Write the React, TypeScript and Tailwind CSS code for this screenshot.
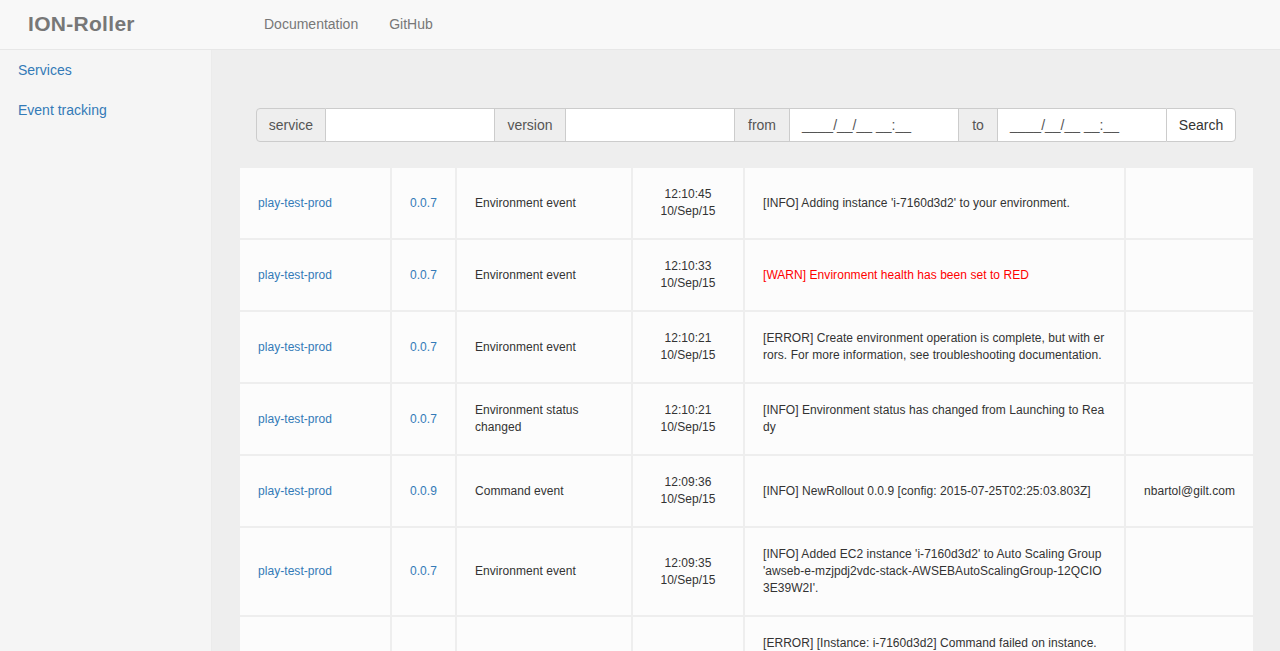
import React from "react";

interface EventRow {
  service: string;
  version: string;
  type: string;
  time: string;
  date: string;
  message: string;
  warn?: boolean;
  user?: string;
}

const rows: EventRow[] = [
  {
    service: "play-test-prod",
    version: "0.0.7",
    type: "Environment event",
    time: "12:10:45",
    date: "10/Sep/15",
    message: "[INFO] Adding instance 'i-7160d3d2' to your environment.",
  },
  {
    service: "play-test-prod",
    version: "0.0.7",
    type: "Environment event",
    time: "12:10:33",
    date: "10/Sep/15",
    message: "[WARN] Environment health has been set to RED",
    warn: true,
  },
  {
    service: "play-test-prod",
    version: "0.0.7",
    type: "Environment event",
    time: "12:10:21",
    date: "10/Sep/15",
    message:
      "[ERROR] Create environment operation is complete, but with errors. For more information, see troubleshooting documentation.",
  },
  {
    service: "play-test-prod",
    version: "0.0.7",
    type: "Environment status changed",
    time: "12:10:21",
    date: "10/Sep/15",
    message: "[INFO] Environment status has changed from Launching to Ready",
  },
  {
    service: "play-test-prod",
    version: "0.0.9",
    type: "Command event",
    time: "12:09:36",
    date: "10/Sep/15",
    message: "[INFO] NewRollout 0.0.9 [config: 2015-07-25T02:25:03.803Z]",
    user: "nbartol@gilt.com",
  },
  {
    service: "play-test-prod",
    version: "0.0.7",
    type: "Environment event",
    time: "12:09:35",
    date: "10/Sep/15",
    message:
      "[INFO] Added EC2 instance 'i-7160d3d2' to Auto Scaling Group 'awseb-e-mzjpdj2vdc-stack-AWSEBAutoScalingGroup-12QCIO3E39W2I'.",
  },
  {
    service: "play-test-prod",
    version: "0.0.7",
    type: "Environment event",
    time: "12:09:35",
    date: "10/Sep/15",
    message:
      "[ERROR] [Instance: i-7160d3d2] Command failed on instance. Return code: 1 Output: (TRUNCATED)...ontainer_support/hooks/pre/01_setup_env.sh failed. For more detail, check /var/log/eb-activity.log using console or EB CLI. Hook /opt/elasticbeanstalk/hooks/appdeploy/pre/01_setup_env.sh failed. For more detail, check /var/log/eb-activity.log using console or EB CLI.",
  },
];

const cell = "bg-[#fcfcfc] px-[18px] py-[18px] flex items-center";

const App = () => {
  return (
    <div className="min-h-screen flex flex-col bg-[#eeeeee] text-[#333] font-['Liberation_Sans',Arial,sans-serif]">
      {/* navbar */}
      <div className="h-[50px] shrink-0 bg-[#f8f8f8] border-b border-[#e7e7e7] flex items-center">
        <div className="ml-[28px] w-[236px] text-[21px] font-bold text-[#777] tracking-[0.3px] pb-[2px]">
          ION-Roller
        </div>
        <div className="flex gap-[31px] text-[14px] text-[#777]">
          <span>Documentation</span>
          <span>GitHub</span>
        </div>
      </div>

      <div className="flex flex-1">
        {/* sidebar */}
        <div className="w-[212px] shrink-0 bg-[#f5f5f5] border-r border-[#ebebeb]">
          <div className="flex flex-col text-[14px] leading-[20px] text-[#337ab7]">
            <span className="px-[18px] py-[10px]">Services</span>
            <span className="px-[18px] py-[10px]">Event tracking</span>
          </div>
        </div>

        {/* main */}
        <div className="flex-1 pt-[58px] pb-[40px]">
          <div className="ml-[44px] w-[980px] h-[34px] flex text-[14px] text-[#555]">
            <div className="w-[70px] flex items-center justify-center bg-[#eee] border border-[#ccc] rounded-l-[4px]">
              service
            </div>
            <div className="w-[168px] bg-white border-y border-[#ccc]" />
            <div className="w-[72px] flex items-center justify-center bg-[#eee] border border-[#ccc]">
              version
            </div>
            <div className="w-[168px] bg-white border-y border-[#ccc]" />
            <div className="w-[56px] flex items-center justify-center bg-[#eee] border border-[#ccc]">
              from
            </div>
            <div className="w-[168px] bg-white border-y border-[#ccc] flex items-center pl-[12px]">
              ____/__/__ __:__
            </div>
            <div className="w-[40px] flex items-center justify-center bg-[#eee] border border-[#ccc]">
              to
            </div>
            <div className="w-[168px] bg-white border-y border-[#ccc] flex items-center pl-[12px]">
              ____/__/__ __:__
            </div>
            <div className="w-[70px] flex items-center justify-center bg-white border border-[#ccc] rounded-r-[4px] text-[#333]">
              Search
            </div>
          </div>

          {/* events */}
          <div className="ml-[28px] mt-[26px] w-[1013px] grid grid-cols-[150px_63px_174px_110px_379px_127px] gap-[2px] text-[12px] leading-[17px] tracking-[0.05px]">
            {rows.map((r, i) => (
              <React.Fragment key={i}>
                <div className={`${cell} text-[#337ab7]`}>{r.service}</div>
                <div className={`${cell} justify-center text-[#337ab7]`}>
                  {r.version}
                </div>
                <div className={cell}>{r.type}</div>
                <div className={`${cell} flex-col justify-center text-center`}>
                  <span>{r.time}</span>
                  <span>{r.date}</span>
                </div>
                <div
                  className={`${cell} break-all ${
                    r.warn ? "text-[#ff0000]" : ""
                  }`}
                >
                  <span>{r.message}</span>
                </div>
                <div className={`${cell} justify-center`}>{r.user}</div>
              </React.Fragment>
            ))}
          </div>
        </div>
      </div>
    </div>
  );
};

export default App;
